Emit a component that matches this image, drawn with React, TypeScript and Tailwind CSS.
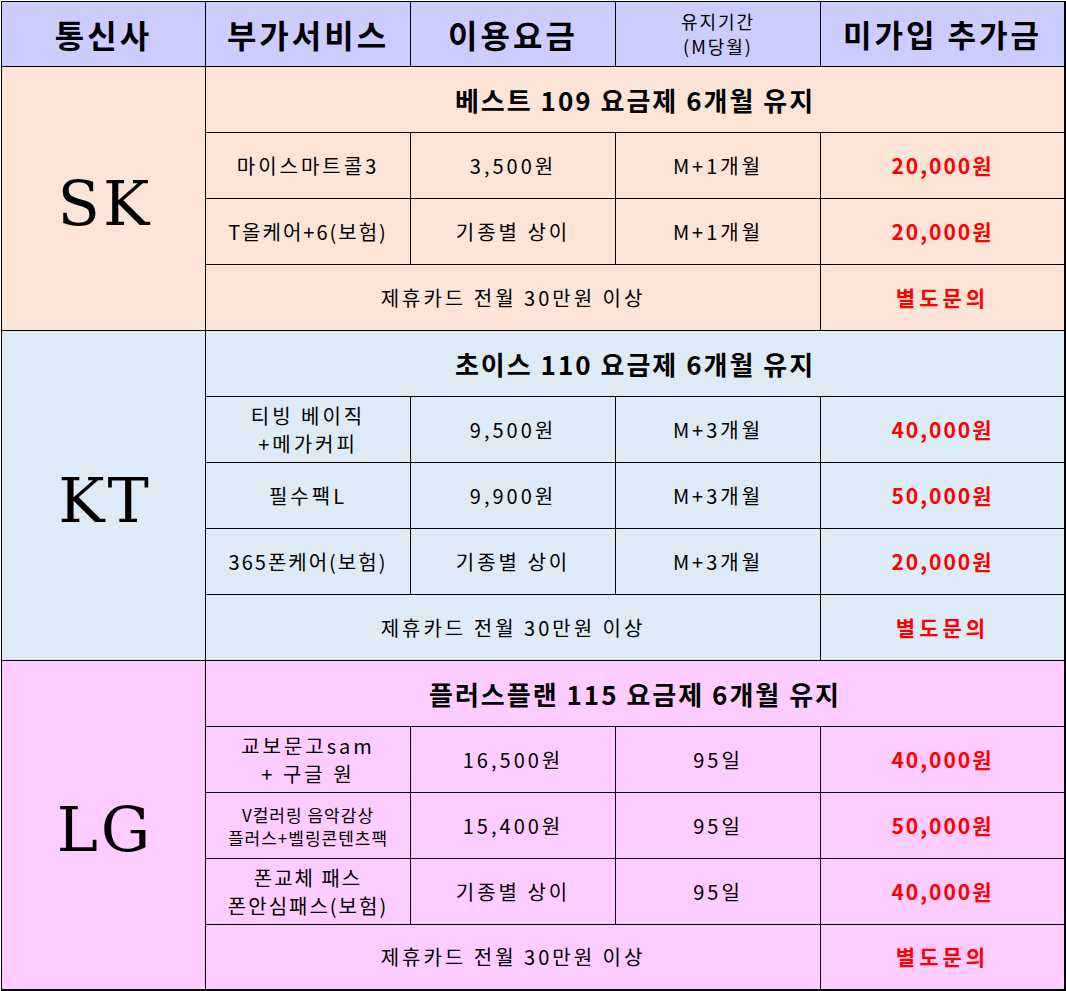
import React from "react";

const KR = { fontFamily: '"Noto Sans CJK KR", "Noto Sans", sans-serif' };

const SK_BG = "bg-[#fce4d6]";
const KT_BG = "bg-[#ddebf7]";
const LG_BG = "bg-[#ffccff]";

function Cell({
  bg,
  className = "",
  children,
}: {
  bg: string;
  className?: string;
  children: React.ReactNode;
}) {
  return (
    <div className={`${bg} flex items-center justify-center text-center ${className}`}>
      {children}
    </div>
  );
}

type Row = {
  name: React.ReactNode;
  nameClass?: string;
  price: string;
  period: string;
  extra: string;
};

function Body({ text }: { text: React.ReactNode }) {
  return <span className="text-[20px] font-normal tracking-[3px] text-black">{text}</span>;
}

function Red({ text, wide }: { text: string; wide?: boolean }) {
  return (
    <span
      className={`font-bold text-[#ff0000] ${
        wide ? "text-[21px] tracking-[4px]" : "text-[21px] tracking-[2px]"
      }`}
    >
      {text}
    </span>
  );
}

function Group({
  bg,
  label,
  rowSpan,
  title,
  rows,
}: {
  bg: string;
  label: string;
  rowSpan: string;
  title: string;
  rows: Row[];
}) {
  return (
    <>
      <Cell bg={bg} className={`${rowSpan} pt-[10px]`}>
        <span
          className="text-[62px] font-normal tracking-[3px] leading-none text-black pl-[3px]"
          style={{ fontFamily: '"DejaVu Serif", "Liberation Serif", serif' }}
        >
          {label}
        </span>
      </Cell>
      <Cell bg={bg} className="col-span-4">
        <span className="text-[26px] font-bold tracking-[2px] text-black">{title}</span>
      </Cell>
      {rows.map((r, i) => (
        <React.Fragment key={i}>
          <Cell bg={bg}>
            <span
              className={r.nameClass ?? "text-[20px] font-normal tracking-[3px] leading-[28px]"}
            >
              {r.name}
            </span>
          </Cell>
          <Cell bg={bg}>
            <Body text={r.price} />
          </Cell>
          <Cell bg={bg}>
            <Body text={r.period} />
          </Cell>
          <Cell bg={bg}>
            <Red text={r.extra} />
          </Cell>
        </React.Fragment>
      ))}
      <Cell bg={bg} className="col-span-3">
        <Body text="제휴카드 전월 30만원 이상" />
      </Cell>
      <Cell bg={bg}>
        <Red text="별도문의" wide />
      </Cell>
    </>
  );
}

export default function App() {
  const header = "bg-[#ccccff]";
  return (
    <div className="w-[1066px] h-[991px] bg-white pl-px pt-px" style={KR}>
      <div
        className="grid w-[1065px] bg-black pl-px pt-px pr-[2px] pb-[2px] gap-px text-black"
        style={{
          gridTemplateColumns: "203px 204px 204px 204px 243px",
          gridTemplateRows: "64px repeat(13, 65px) 64px",
        }}
      >
        <Cell bg={header}>
          <span className="text-[32px] font-bold tracking-[3px]">통신사</span>
        </Cell>
        <Cell bg={header}>
          <span className="text-[32px] font-bold tracking-[3px]">부가서비스</span>
        </Cell>
        <Cell bg={header}>
          <span className="text-[32px] font-bold tracking-[3px]">이용요금</span>
        </Cell>
        <Cell bg={header}>
          <span className="text-[18px] font-normal tracking-[2px] leading-[25px]">
            유지기간
            <br />
            (M당월)
          </span>
        </Cell>
        <Cell bg={header}>
          <span className="text-[31px] font-bold tracking-[3px]">미가입 추가금</span>
        </Cell>

        <Group
          bg={SK_BG}
          label="SK"
          rowSpan="row-span-4"
          title="베스트 109 요금제 6개월 유지"
          rows={[
            { name: "마이스마트콜3", price: "3,500원", period: "M+1개월", extra: "20,000원" },
            {
              name: "T올케어+6(보험)",
              nameClass: "text-[20px] font-normal tracking-[2px]",
              price: "기종별 상이",
              period: "M+1개월",
              extra: "20,000원",
            },
          ]}
        />
        <Group
          bg={KT_BG}
          label="KT"
          rowSpan="row-span-5"
          title="초이스 110 요금제 6개월 유지"
          rows={[
            {
              name: (
                <>
                  티빙 베이직
                  <br />
                  +메가커피
                </>
              ),
              price: "9,500원",
              period: "M+3개월",
              extra: "40,000원",
            },
            { name: "필수팩L", price: "9,900원", period: "M+3개월", extra: "50,000원" },
            {
              name: "365폰케어(보험)",
              nameClass: "text-[20px] font-normal tracking-[2px]",
              price: "기종별 상이",
              period: "M+3개월",
              extra: "20,000원",
            },
          ]}
        />
        <Group
          bg={LG_BG}
          label="LG"
          rowSpan="row-span-5"
          title="플러스플랜 115 요금제 6개월 유지"
          rows={[
            {
              name: (
                <>
                  교보문고sam
                  <br />+ 구글 원
                </>
              ),
              price: "16,500원",
              period: "95일",
              extra: "40,000원",
            },
            {
              name: (
                <>
                  V컬러링 음악감상
                  <br />
                  플러스+벨링콘텐츠팩
                </>
              ),
              nameClass: "text-[17px] font-normal tracking-[1px] leading-[23px]",
              price: "15,400원",
              period: "95일",
              extra: "50,000원",
            },
            {
              name: (
                <>
                  폰교체 패스
                  <br />
                  폰안심패스(보험)
                </>
              ),
              nameClass: "text-[20px] font-normal tracking-[2px] leading-[28px]",
              price: "기종별 상이",
              period: "95일",
              extra: "40,000원",
            },
          ]}
        />
      </div>
    </div>
  );
}
